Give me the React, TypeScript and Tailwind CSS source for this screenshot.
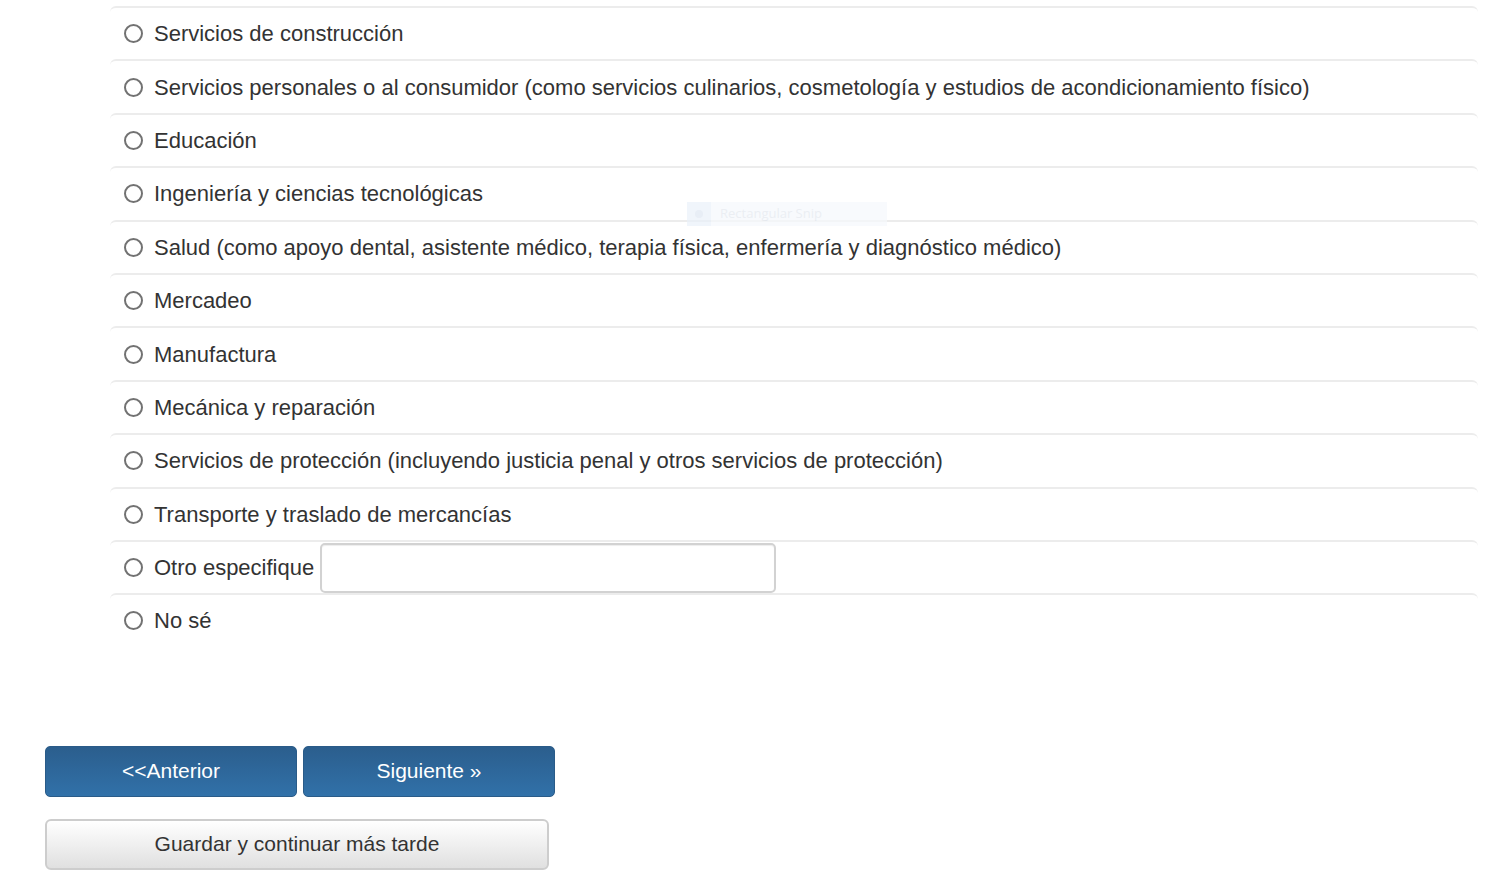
import React from 'react';

const options = [
  'Servicios de construcción',
  'Servicios personales o al consumidor (como servicios culinarios, cosmetología y estudios de acondicionamiento físico)',
  'Educación',
  'Ingeniería y ciencias tecnológicas',
  'Salud (como apoyo dental, asistente médico, terapia física, enfermería y diagnóstico médico)',
  'Mercadeo',
  'Manufactura',
  'Mecánica y reparación',
  'Servicios de protección (incluyendo justicia penal y otros servicios de protección)',
  'Transporte y traslado de mercancías',
];

function Radio() {
  return (
    <span className="w-[19px] h-[19px] rounded-full border-2 border-[#727272] bg-white shrink-0" />
  );
}

export default function App() {
  return (
    <div
      className="relative w-[1503px] h-[871px] bg-white text-[#333] overflow-hidden"
      style={{ fontFamily: '"Liberation Sans", Arial, sans-serif' }}
    >
      <div className="pt-[6px] pl-[110px] pr-[25px]">
        {options.map((o) => (
          <label
            key={o}
            className="flex items-center gap-[11px] h-[53.4px] pl-[14px] border-t-2 border-[#ececec] rounded-[6px] text-[22px]"
          >
            <Radio />
            <span>{o}</span>
          </label>
        ))}
        <label className="flex items-center h-[53.4px] pl-[14px] border-t-2 border-[#ececec] rounded-[6px] text-[22px]">
          <Radio />
          <span className="ml-[11px]">Otro especifique</span>
          <input
            type="text"
            className="ml-[6px] w-[456px] h-[50px] border-2 border-[#d2d2d2] rounded-[5px] shadow-[inset_0_1px_1px_rgba(0,0,0,0.075)] outline-none"
          />
        </label>
        <label className="flex items-center gap-[11px] h-[53.4px] pl-[14px] border-t-2 border-[#ececec] rounded-[6px] text-[22px]">
          <Radio />
          <span>No sé</span>
        </label>
      </div>

      <div className="pl-[45px] mt-[99px] flex flex-col gap-[22px]">
        <div className="flex gap-[6px]">
          <button className="w-[252px] h-[51px] rounded-[5px] border border-[#2a5b88] bg-gradient-to-b from-[#2b5e8d] to-[#3171a9] text-white text-[21px]">
            &lt;&lt;Anterior
          </button>
          <button className="w-[252px] h-[51px] rounded-[5px] border border-[#2a5b88] bg-gradient-to-b from-[#2b5e8d] to-[#3171a9] text-white text-[21px]">
            Siguiente »
          </button>
        </div>
        <button className="w-[504px] h-[51px] rounded-[6px] border-2 border-[#cdcdcd] bg-gradient-to-b from-white to-[#e0e0e0] text-[#333] text-[21px]">
          Guardar y continuar más tarde
        </button>
      </div>

      {/* faint screen-snip overlay */}
      <div className="absolute left-[687px] top-[202px] w-[200px] h-[24px] flex items-center bg-[#f6f9fd] opacity-70">
        <div className="w-[24px] h-full bg-[#eaf1fa] flex items-center justify-center">
          <span className="w-[8px] h-[8px] rounded-full bg-[#dfe7f3]" />
        </div>
        <span
          className="ml-[9px] text-[13px] text-[#e3e8ef]"
          style={{ fontFamily: '"Open Sans", sans-serif' }}
        >
          Rectangular Snip
        </span>
      </div>
    </div>
  );
}
